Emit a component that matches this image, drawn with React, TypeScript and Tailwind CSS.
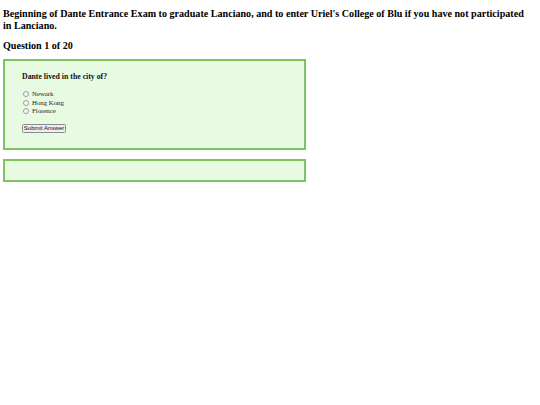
const options = ["Newark", "Hong Kong", "Florence"];

export default function App() {
  return (
    <div className="min-h-screen bg-white px-[3px] pt-[8px] font-['Liberation_Serif',serif] text-black">
      {/* Header */}
      <h2 className="max-w-[526px] text-[10.1px] font-bold leading-[11.5px]">
        Beginning of Dante Entrance Exam to graduate Lanciano, and to enter Uriel's College of Blu if you
        have not participated in Lanciano.
      </h2>
      <h2 className="mt-[8.5px] text-[10.1px] font-bold leading-[11.5px]">Question 1 of 20</h2>

      {/* Question card */}
      <div className="mt-[8px] w-[303px] border-2 border-[#80c262] bg-[#e6fbe2] pb-[15px] pl-[17px] pt-[12px]">
        <h4 className="text-[7.8px] font-bold leading-[8px] text-[#111]">Dante lived in the city of?</h4>
        <div className="mt-[9px] flex flex-col">
          {options.map((opt) => (
            <label key={opt} className="flex h-[8.5px] items-center text-[6.8px] leading-[8.5px] text-[#222]">
              <span className="ml-[1px] mr-[3px] h-[6px] w-[6px] rounded-full border-[0.75px] border-[#9a9a9a] bg-white" />
              {opt}
            </label>
          ))}
        </div>
        <button className="mt-[8px] flex h-[9px] w-[44px] items-center justify-center rounded-[1.5px] border-[0.75px] border-[#8a8a8a] bg-[#efefef] font-['Liberation_Sans',sans-serif] text-[6.1px] leading-none text-[#111]">
          Submit Answer
        </button>
      </div>

      {/* Feedback card */}
      <div className="mt-[9px] h-[23px] w-[303px] border-2 border-[#80c262] bg-[#e6fbe2]" />
    </div>
  );
}
